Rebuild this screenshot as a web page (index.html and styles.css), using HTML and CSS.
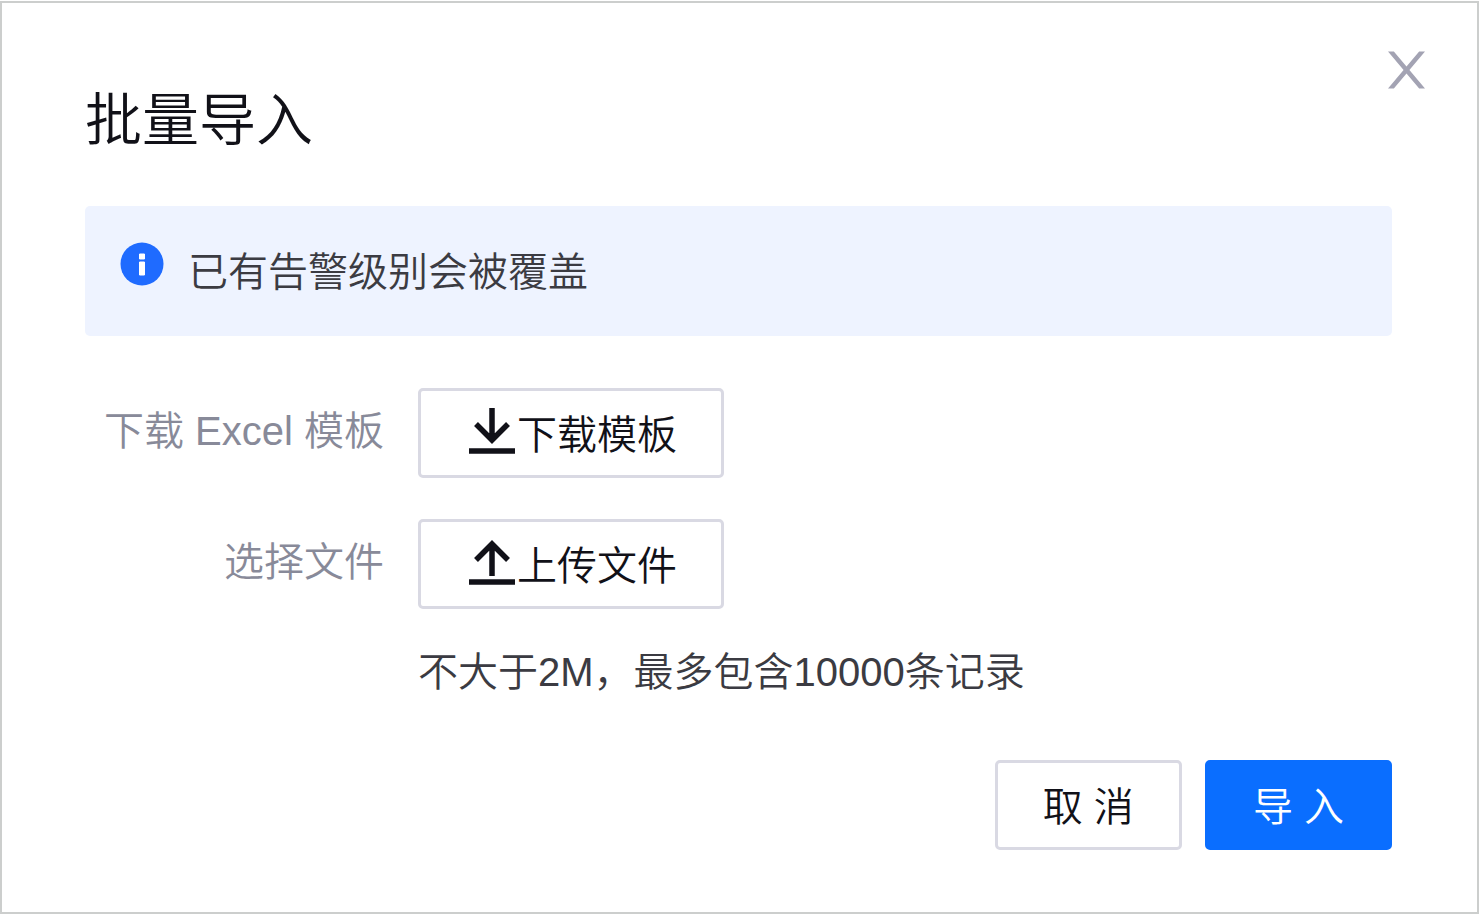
FILE: index.html
```html
<!DOCTYPE html>
<html lang="zh-CN">
<head>
<meta charset="utf-8">
<title>批量导入</title>
<link rel="stylesheet" href="styles.css">
</head>
<body>
<main class="dialog" role="dialog" aria-labelledby="dialog-title">
  <button class="close" type="button" aria-label="关闭">
    <svg class="close-icon" viewBox="0 0 38 38" aria-hidden="true"><path d="M0 0h6l13 15.500L32 0h6L22 19l16 19h-6L19 22.500 6 38H0l16-19z"/></svg>
  </button>
  <h1 class="title" id="dialog-title">批量导入</h1>
  <div class="alert" role="note">
    <svg class="alert-icon" viewBox="0 0 44 44" aria-hidden="true"><circle cx="22" cy="22" r="21.500" fill="#1f6bff"/><path d="M19.500 12h5v5h-5zM19.500 20h5v13h-5z" fill="#fff" stroke="#fff" stroke-linejoin="round"/></svg>
    <p class="alert-text">已有告警级别会被覆盖</p>
  </div>
  <form class="form">
    <label class="label" for="download">下载 Excel 模板</label>
    <button class="button" id="download" type="button">
      <svg class="button-icon" viewBox="0 0 46 46" fill="none" stroke="#111118" stroke-width="5.500" aria-hidden="true"><path d="M23 0v32M7 16l16 16 16-16M0 43h46"/></svg>下载模板
    </button>
    <label class="label" for="upload">选择文件</label>
    <button class="button" id="upload" type="button">
      <svg class="button-icon" viewBox="0 0 46 46" fill="none" stroke="#111118" stroke-width="5.500" aria-hidden="true"><path d="M23 37V5M7 21L23 5l16 16M0 43h46"/></svg>上传文件
    </button>
    <p class="hint">不大于2M，最多包含10000条记录</p>
  </form>
  <footer class="footer">
    <button class="button action" type="button">取 消</button>
    <button class="button action primary" type="button">导 入</button>
  </footer>
</main>
</body>
</html>
```
FILE: styles.css
```css
* { box-sizing: border-box; }

body {
  margin: 0;
  padding: 1px 0 2px;
  background: #fff;
  color: #111118;
  font: 350 40px/60px "Liberation Sans", "Noto Sans CJK SC DemiLight", "Noto Sans CJK SC", sans-serif;
}

.dialog {
  position: relative;
  padding: 77px 85px 62px 83px;
  border: 2px solid #cccecd;
  background: #fff;
}

.close {
  position: absolute;
  top: 48px;
  right: 52px;
  padding: 0;
  border: 0;
  background: none;
  cursor: pointer;
}

.close-icon {
  display: block;
  width: 37px;
  height: 38px;
  fill: #a3a3b3;
}

.title {
  margin: 0 0 46px;
  font-size: 57px;
  font-weight: inherit;
  line-height: 80px;
}

.alert {
  display: flex;
  align-items: flex-start;
  gap: 24px;
  padding: 36px 35px 34px;
  border-radius: 5px;
  background: #eef3ff;
  color: #3b3b42;
}

.alert-icon {
  flex: none;
  width: 44px;
  height: 44px;
}

.alert-text { margin: 0; }

.form {
  display: grid;
  grid-template-columns: 299px 1fr;
  gap: 41px 34px;
  margin-top: 52px;
}

.label {
  padding-top: 13px;
  color: #888a99;
  text-align: right;
  white-space: nowrap;
}

.button {
  display: flex;
  align-items: center;
  justify-content: center;
  justify-self: start;
  gap: 2px;
  height: 90px;
  padding: 3px 44px 0 48px;
  border: 3px solid #d9d9e3;
  border-radius: 5px;
  background: #fff;
  color: #111118;
  font: inherit;
  cursor: pointer;
}

.button-icon {
  width: 46px;
  height: 46px;
  margin-bottom: 8px;
}

.hint {
  grid-column: 2;
  margin: -8px 0 0;
  color: #3b3b42;
}

.footer {
  display: flex;
  justify-content: flex-end;
  gap: 23px;
  margin-top: 58px;
}

.action {
  padding: 3px 45px 0;
}

.primary {
  border-color: #0a6eff;
  background: #0a6eff;
  color: #fff;
}
```
